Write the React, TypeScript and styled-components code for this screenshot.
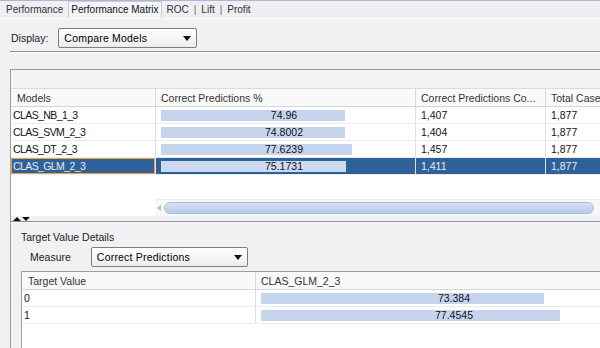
import React from "react";
import styled, { createGlobalStyle } from "styled-components";

const GlobalStyle = createGlobalStyle`
  html, body {
    margin: 0;
    padding: 0;
    background: #f1f0f3;
  }
  body {
    font-family: "Liberation Sans", Arial, sans-serif;
    font-size: 10.5px;
    color: #1a1a1a;
  }
`;

const Page = styled.div`
  width: 600px;
  height: 348px;
  overflow: hidden;
  display: flex;
  flex-direction: column;
  background: #f1f0f3;
`;

// tabs across the top
const TabBar = styled.div`
  height: 17px;
  display: flex;
  align-items: flex-end;
  border-top: 1px solid #a8b9d6;
  border-bottom: 1px solid #ffffff;
  background: #efeef2;
  padding-left: 2px;
  font-size: 10px;
`;

const Tab = styled.div<{ active?: boolean }>`
  height: 16px;
  line-height: 16px;
  padding: 0 ${(p) => (p.active ? "2px" : "3px")};
  margin: 0 ${(p) => (p.active ? "1px" : "0")};
  border: 1px solid ${(p) => (p.active ? "#c9c9cf" : "transparent")};
  border-bottom: none;
  background: ${(p) => (p.active ? "#f5f5f7" : "transparent")};
  color: ${(p) => (p.active ? "#111" : "#333")};
`;

const TabSep = styled.span`
  color: #666;
  line-height: 16px;
  height: 16px;
  padding: 0 1px;
`;

const DisplayRow = styled.div`
  display: flex;
  align-items: center;
  gap: 10px;
  padding: 9px 0 0 11px;
  height: 20px;
`;

const Label = styled.span`
  color: #222;
`;

const Select = styled.div<{ w: number }>`
  width: ${(p) => p.w}px;
  height: 20px;
  box-sizing: border-box;
  border: 1px solid #7d7d84;
  border-radius: 2px;
  background: linear-gradient(#ffffff, #ececef);
  display: flex;
  align-items: center;
  justify-content: space-between;
  padding: 0 5px 0 5px;
  color: #000;
  letter-spacing: 0.2px;
`;

const Caret = styled.span`
  width: 0;
  height: 0;
  border-left: 4px solid transparent;
  border-right: 4px solid transparent;
  border-top: 5px solid #111;
`;

const Divider = styled.div`
  margin: 3px 0 0 10px;
  height: 1px;
  background: #8d8d92;
  border-bottom: 1px solid #fafafa;
`;

const Frame = styled.div`
  margin: 16px 0 0 10px;
  flex: 1;
  border-top: 1px solid #9c9ca2;
  border-left: 1px solid #9c9ca2;
  display: flex;
  flex-direction: column;
  min-height: 0;
`;

const FrameBand = styled.div`
  height: 18px;
  background: #f4f4f6;
  border-bottom: 1px solid #dcdce0;
`;

const GridArea = styled.div`
  background: #ffffff;
  display: flex;
  flex-direction: column;
`;

const Row = styled.div<{ cols: string; selected?: boolean; header?: boolean }>`
  display: grid;
  grid-template-columns: ${(p) => p.cols};
  height: ${(p) => (p.header ? "18px" : "17px")};
  box-sizing: border-box;
  background: ${(p) => (p.selected ? "#2f6199" : p.header ? "#f9f9fa" : "#ffffff")};
  border-bottom: 1px solid ${(p) => (p.header ? "#d5d5da" : "#ececef")};
  color: ${(p) => (p.selected ? "#e4ecf6" : p.header ? "#333" : "#111")};
  white-space: nowrap;
`;

const Cell = styled.div<{ focus?: boolean; sep?: boolean; tight?: boolean }>`
  position: relative;
  overflow: hidden;
  display: flex;
  align-items: center;
  padding-left: ${(p) => (p.sep ? "5px" : "2px")};
  border-left: ${(p) => (p.sep ? "1px solid #e0e0e4" : "none")};
  box-shadow: ${(p) => (p.focus ? "inset 0 0 0 1px #f2a43a" : "none")};
  letter-spacing: ${(p) => (p.tight ? "-0.6px" : "0")};
`;

const HeadCell = styled(Cell)`
  padding-left: ${(p) => (p.sep ? "5px" : "6px")};
  border-left: ${(p) => (p.sep ? "1px solid #d8d8dc" : "none")};
`;

const BarTrack = styled.div`
  position: relative;
  flex: 1;
  height: 100%;
  display: flex;
  align-items: center;
  margin-right: 8px;
`;

const Bar = styled.div<{ light?: boolean }>`
  position: absolute;
  left: 0;
  top: 3px;
  height: 11px;
  background: ${(p) => (p.light ? "#cbdaf0" : "#c6d5ee")};
`;

const BarValue = styled.span`
  position: relative;
  width: 100%;
  text-align: center;
  color: #111;
`;

const EmptySpace = styled.div<{ h: number }>`
  height: ${(p) => p.h}px;
  background: #ffffff;
`;

const ScrollRow = styled.div`
  display: grid;
  grid-template-columns: 144px 1fr;
  height: 17px;
  background: #ffffff;
`;

const ScrollTrack = styled.div`
  display: flex;
  align-items: center;
  background: #f7f7f9;
  border-top: 1px solid #ececf0;
  padding: 0 0 0 2px;
`;

const ScrollArrow = styled.span`
  width: 0;
  height: 0;
  border-top: 3px solid transparent;
  border-bottom: 3px solid transparent;
  border-right: 4px solid #b8b8c0;
  margin-right: 3px;
`;

const Thumb = styled.div`
  flex: 1;
  height: 10px;
  border-radius: 6px;
  background: linear-gradient(#d6e2f4, #c3d3ec 60%, #b9cbe8);
  border: 1px solid #a9bedf;
  margin-right: 6px;
`;

const Splitter = styled.div`
  height: 5px;
  display: flex;
  align-items: flex-end;
  gap: 1px;
  padding-left: 2px;
  border-bottom: 1px solid #8e8e94;
  background: #f1f0f3;
`;

const Arrow = styled.span<{ up?: boolean }>`
  width: 0;
  height: 0;
  border-left: 4px solid transparent;
  border-right: 4px solid transparent;
  ${(p) => (p.up ? "border-bottom: 4px solid #111;" : "border-top: 4px solid #111;")}
`;

const Lower = styled.div`
  flex: 1;
  background: #f1f0f3;
  border-top: 1px solid #fbfbfb;
  display: flex;
  flex-direction: column;
  padding-left: 10px;
  min-height: 0;
`;

const SectionTitle = styled.div`
  margin-top: 7px;
  height: 14px;
  line-height: 14px;
  color: #222;
`;

const MeasureRow = styled.div`
  display: flex;
  align-items: center;
  gap: 20px;
  padding-left: 9px;
  margin-top: 3px;
  height: 20px;
`;

const SubTable = styled.div`
  margin-top: 4px;
  flex: 1;
  background: #ffffff;
  border-top: 1px solid #9c9ca2;
  border-left: 1px solid #9c9ca2;
`;

const models = [
  { name: "CLAS_NB_1_3", pct: 74.96, label: "74.96", count: "1,407", total: "1,877" },
  { name: "CLAS_SVM_2_3", pct: 74.8002, label: "74.8002", count: "1,404", total: "1,877" },
  { name: "CLAS_DT_2_3", pct: 77.6239, label: "77.6239", count: "1,457", total: "1,877" },
  { name: "CLAS_GLM_2_3", pct: 75.1731, label: "75.1731", count: "1,411", total: "1,877" },
];

const targets = [
  { value: "0", pct: 73.384, label: "73.384" },
  { value: "1", pct: 77.4545, label: "77.4545" },
];

const topCols = "144px 260px 130px 120px";
const subCols = "233px 400px";

export default function App() {
  const selected = 3;
  return (
    <>
      <GlobalStyle />
      <Page>
        <TabBar>
          <Tab>Performance</Tab>
          <Tab active>Performance Matrix</Tab>
          <Tab>ROC</Tab>
          <TabSep>|</TabSep>
          <Tab>Lift</Tab>
          <TabSep>|</TabSep>
          <Tab>Profit</Tab>
        </TabBar>

        <DisplayRow>
          <Label>Display:</Label>
          <Select w={139}>
            Compare Models
            <Caret />
          </Select>
        </DisplayRow>
        <Divider />

        <Frame>
          <FrameBand />
          <GridArea>
            <Row cols={topCols} header>
              <HeadCell>Models</HeadCell>
              <HeadCell sep>Correct Predictions %</HeadCell>
              <HeadCell sep>Correct Predictions Co...</HeadCell>
              <HeadCell sep>Total Cases</HeadCell>
            </Row>
            {models.map((m, i) => (
              <Row key={m.name} cols={topCols} selected={i === selected}>
                <Cell tight focus={i === selected}>{m.name}</Cell>
                <Cell sep>
                  <BarTrack>
                    <Bar light={i === selected} style={{ width: `${m.pct}%` }} />
                    <BarValue>{m.label}</BarValue>
                  </BarTrack>
                </Cell>
                <Cell sep>{m.count}</Cell>
                <Cell sep>{m.total}</Cell>
              </Row>
            ))}
            <EmptySpace h={24} />
            <ScrollRow>
              <div />
              <ScrollTrack>
                <ScrollArrow />
                <Thumb />
              </ScrollTrack>
            </ScrollRow>
          </GridArea>

          <Splitter>
            <Arrow up />
            <Arrow />
          </Splitter>

          <Lower>
            <SectionTitle>Target Value Details</SectionTitle>
            <MeasureRow>
              <Label>Measure</Label>
              <Select w={157}>
                Correct Predictions
                <Caret />
              </Select>
            </MeasureRow>
            <SubTable>
              <Row cols={subCols} header>
                <HeadCell>Target Value</HeadCell>
                <HeadCell sep>CLAS_GLM_2_3</HeadCell>
              </Row>
              {targets.map((t) => (
                <Row key={t.value} cols={subCols}>
                  <Cell>{t.value}</Cell>
                  <Cell sep>
                    <BarTrack>
                      <Bar style={{ width: `${t.pct}%` }} />
                      <BarValue>{t.label}</BarValue>
                    </BarTrack>
                  </Cell>
                </Row>
              ))}
            </SubTable>
          </Lower>
        </Frame>
      </Page>
    </>
  );
}
